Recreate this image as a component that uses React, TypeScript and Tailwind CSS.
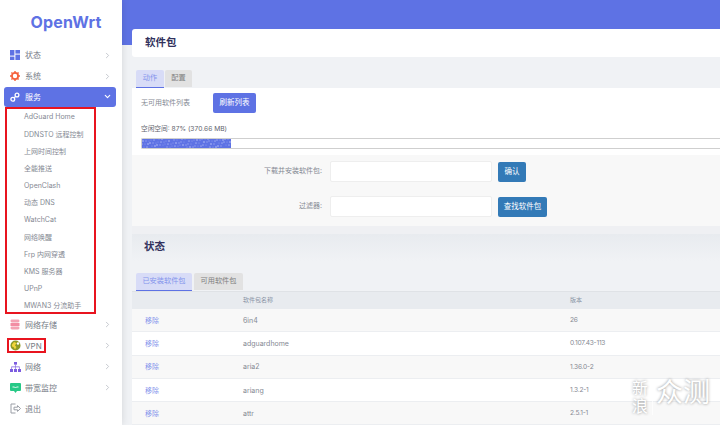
import { ChevronRight, ChevronDown } from 'lucide-react';

const font = { fontFamily: 'Inter, "Noto Sans CJK SC", sans-serif' };

function DashIcon() {
  return (
    <svg width="10" height="10" viewBox="0 0 10 10" fill="#5e72e4">
      <rect x="0" y="0" width="4.4" height="5.6" />
      <rect x="5.4" y="0" width="4.6" height="3.6" />
      <rect x="0" y="6.6" width="4.4" height="3.4" />
      <rect x="5.4" y="4.6" width="4.6" height="5.4" />
    </svg>
  );
}

function GearIcon() {
  return (
    <svg width="10" height="10" viewBox="0 0 10 10" fill="none">
      <circle cx="5" cy="5" r="3.1" stroke="#f5603a" strokeWidth="1.8" />
      <g stroke="#f5603a" strokeWidth="1.4">
        <path d="M5 0v1.6M5 8.4V10M0 5h1.6M8.4 5H10M1.4 1.4l1.1 1.1M7.5 7.5l1.1 1.1M8.6 1.4L7.5 2.5M2.5 7.5L1.4 8.6" />
      </g>
    </svg>
  );
}

function ServiceIcon() {
  return (
    <svg width="10" height="10" viewBox="0 0 10 10" fill="none" stroke="#fff" strokeWidth="1.3">
      <circle cx="2.8" cy="7.2" r="1.9" />
      <circle cx="7" cy="3" r="1.9" />
      <path d="M4.2 5.8l1.4-1.4" />
    </svg>
  );
}

function StorageIcon() {
  return (
    <svg width="10" height="11" viewBox="0 0 10 11" fill="#f4a3b4">
      <rect x="0.5" y="0.5" width="9" height="3" rx="1.4" />
      <rect x="0.5" y="4" width="9" height="3" fill="#f28da3" />
      <rect x="0.5" y="7.5" width="9" height="3" rx="1.4" />
    </svg>
  );
}

function VpnIcon() {
  return (
    <svg width="11" height="11" viewBox="0 0 11 11">
      <circle cx="5.5" cy="5.5" r="5" fill="#8d9a26" />
      <path d="M2 4.5l2-2.5 2.5 1L5 5.5l1.5 1.5L5 9.5 3.5 7 2 6.5z" fill="#f2d43a" />
      <circle cx="8" cy="3.5" r="1.2" fill="#fff" />
    </svg>
  );
}

function NetworkIcon() {
  return (
    <svg width="11" height="10" viewBox="0 0 11 10" fill="#7c5ce0">
      <rect x="4" y="0" width="3" height="2.6" />
      <rect x="0" y="7" width="3" height="3" />
      <rect x="4" y="7" width="3" height="3" />
      <rect x="8" y="7" width="3" height="3" />
      <path d="M5.2 2.6h.6v2h3.9V7h-.6V5.2H5.8V7h-.6V5.2H1.9V7h-.6V4.6h3.9z" />
    </svg>
  );
}

function MonitorIcon() {
  return (
    <svg width="11" height="10" viewBox="0 0 11 10">
      <path d="M1 0h9a1 1 0 0 1 1 1v6a1 1 0 0 1-1 1H7l-1.5 2L4 8H1a1 1 0 0 1-1-1V1a1 1 0 0 1 1-1z" fill="#27c987" />
      <path d="M2.5 4h2l1 1 1-1h2" stroke="#fff" strokeWidth="0.9" fill="none" />
    </svg>
  );
}

function LogoutIcon() {
  return (
    <svg width="11" height="11" viewBox="0 0 11 11" fill="none" stroke="#9a9ea6" strokeWidth="1">
      <path d="M5.5 1H1v9h4.5" />
      <path d="M4 4.2h3.5V2.6l3 2.9-3 2.9V6.8H4z" />
    </svg>
  );
}

const subItems = [
  'AdGuard Home',
  'DDNSTO 远程控制',
  '上网时间控制',
  '全能推送',
  'OpenClash',
  '动态 DNS',
  'WatchCat',
  '网络唤醒',
  'Frp 内网穿透',
  'KMS 服务器',
  'UPnP',
  'MWAN3 分流助手',
];

const packages = [
  { name: '6in4', version: '26' },
  { name: 'adguardhome', version: '0.107.43-113' },
  { name: 'aria2', version: '1.36.0-2' },
  { name: 'ariang', version: '1.3.2-1' },
  { name: 'attr', version: '2.5.1-1' },
];

// scattered light specks across the used-space bar
const specks = Array.from({ length: 90 }, (_, i) => ({
  x: (i * 37) % 89,
  y: (i * 13) % 9,
  r: 0.5 + ((i * 7) % 5) * 0.12,
}));

function NavItem({ icon, label, arrow = true }: { icon: React.ReactNode; label: string; arrow?: boolean }) {
  return (
    <div className="h-[21px] flex items-center pl-[6px] pr-[6px] text-[8px] text-[#777c86]">
      <span className="w-[14px] flex justify-start">{icon}</span>
      <span className="ml-[1px]">{label}</span>
      {arrow && <ChevronRight size={9} className="ml-auto text-[#b4b8c0]" />}
    </div>
  );
}

function Tab({ label, active, width }: { label: string; active?: boolean; width: string }) {
  return active ? (
    <div className={`h-[18px] ${width} flex items-center justify-center rounded-t-[2px] bg-[#d8dcf7] border-b border-[#5e72e4] text-[7.2px] text-[#8494ec]`}>{label}</div>
  ) : (
    <div className={`h-[17px] ${width} flex items-center justify-center rounded-t-[2px] bg-[#e2e2e2] text-[7.2px] text-[#808080]`}>{label}</div>
  );
}

export default function App() {
  return (
    <div style={font} className="w-[720px] h-[425px] overflow-hidden flex relative bg-[#f0f2f5]">
      <aside className="w-[122px] shrink-0 h-full bg-white shadow-[0_0_8px_rgba(0,0,0,0.12)] z-10 px-[4px]">
        <div className="h-[44.5px] flex items-center justify-center pl-[10px] text-[16px] font-bold text-[#5e72e4] tracking-[0.2px]">OpenWrt</div>
        <NavItem icon={<DashIcon />} label="状态" />
        <NavItem icon={<GearIcon />} label="系统" />
        <div className="h-[20.5px] w-[111.5px] flex items-center rounded-[3px] bg-[#5e72e4] pl-[6px] pr-[3.5px] text-[8px] text-white">
          <span className="w-[14px] flex"><ServiceIcon /></span>
          <span className="ml-[1px]">服务</span>
          <ChevronDown size={9} strokeWidth={3} className="ml-auto" />
        </div>
        <div className="w-[91px] ml-[1px] h-[207px] border-[2px] border-[#e8141f] pl-[17px] flex flex-col">
          {subItems.map((s) => (
            <div key={s} className="h-[17.2px] shrink-0 flex items-center text-[7px] text-[#858993] whitespace-nowrap">{s}</div>
          ))}
        </div>
        <NavItem icon={<StorageIcon />} label="网络存储" />
        <div className="relative">
          <NavItem icon={<VpnIcon />} label="VPN" />
          <div className="absolute left-[3px] top-[3px] w-[39px] h-[15px] border-[2px] border-[#e8141f]" />
        </div>
        <NavItem icon={<NetworkIcon />} label="网络" />
        <NavItem icon={<MonitorIcon />} label="带宽监控" />
        <NavItem icon={<LogoutIcon />} label="退出" arrow={false} />
      </aside>

      <main className="flex-1 min-w-0 flex flex-col">
        <div className="h-[45px] bg-[#5e72e4] shrink-0" />
        <div className="pl-[10px] flex-1 -mt-[16px]">
          <div className="h-[28px] bg-white rounded-l-[3px] flex items-center pl-[13px] text-[10.5px] font-bold text-[#32325d]">软件包</div>

          <div className="flex gap-[1px] mt-[13px] pl-[4px]">
            <Tab label="动作" active width="w-[28px]" />
            <Tab label="配置" width="w-[27px]" />
          </div>

          <div className="bg-white h-[67px] pl-[9px] flex flex-col">
            <div className="flex items-center mt-[5px] text-[7px] text-[#858993]">
              <span className="w-[72px] whitespace-nowrap">无可用软件列表</span>
              <span className="h-[20px] w-[43px] flex items-center justify-center rounded-[2px] bg-[#5e72e4] text-white text-[7.5px]">刷新列表</span>
            </div>
            <div className="mt-[11px] text-[6.7px] text-[#5f646e] leading-[10px]">空闲空间: 87% (370.66 MB)</div>
            <div className="mt-[4px] h-[11px] border border-[#cfcfcf] border-r-0 rounded-l-[2px] bg-white">
              <svg width="89" height="9" className="block">
                <rect width="89" height="9" fill="#5e72e4" />
                {specks.map((d, i) => (
                  <circle key={i} cx={d.x} cy={d.y} r={d.r} fill="#93a1ef" />
                ))}
              </svg>
            </div>
          </div>

          <div className="h-[71px] bg-[#f8f8f8] flex flex-col pl-[114px]">
            <div className="flex items-center h-[21px] mt-[6px]">
              <span className="w-[76px] text-right text-[7px] text-[#858993] whitespace-nowrap">下载并安装软件包:</span>
              <div className="ml-[8px] w-[162px] h-[21px] bg-white border border-[#eeeeee] rounded-[2px]" />
              <span className="ml-[6px] h-[20px] w-[28px] flex items-center justify-center bg-[#337ab7] rounded-[2px] text-white text-[7.5px]">确认</span>
            </div>
            <div className="flex items-center h-[21px] mt-[14px]">
              <span className="w-[76px] text-right text-[7px] text-[#858993]">过滤器:</span>
              <div className="ml-[8px] w-[162px] h-[21px] bg-white border border-[#eeeeee] rounded-[2px]" />
              <span className="ml-[6px] h-[20px] w-[49px] flex items-center justify-center bg-[#337ab7] rounded-[2px] text-white text-[7.5px]">查找软件包</span>
            </div>
          </div>

          <div className="h-[8px] bg-[#eff0f3]" />
          <div className="h-[27px] pb-[2px] bg-gradient-to-b from-[#e8ebef] to-[#f0f2f5] flex items-center pl-[12px] text-[10.5px] font-bold text-[#32325d]">状态</div>

          <div className="flex items-start gap-[2px] mt-[12px] pl-[4px]">
            <Tab label="已安装软件包" active width="w-[56px]" />
            <Tab label="可用软件包" width="w-[49px]" />
          </div>

          <div className="grid grid-cols-[111px_327px_1fr] h-[18px] pb-[1.5px] items-center bg-[#e8ebef] text-[6px] text-[#8a94a6] border-t border-[#dfe2e6]">
            <span />
            <span>软件包名称</span>
            <span>版本</span>
          </div>
          {packages.map((p, i) => (
            <div key={p.name} className={`grid grid-cols-[111px_327px_1fr] h-[23.3px] pt-[1.5px] items-center border-b border-[#eceef1] ${i % 2 === 0 ? 'bg-[#f8f8f8]' : 'bg-white'}`}>
              <span className="pl-[13px] text-[7px] text-[#8494ec]">移除</span>
              <span className="text-[7px] text-[#858993]">{p.name}</span>
              <span className="text-[6.6px] tracking-[-0.2px] text-[#858993]">{p.version}</span>
            </div>
          ))}
        </div>
      </main>

      {/* watermark */}
      <div className="absolute left-[632px] top-[379px] flex items-start text-white pointer-events-none [text-shadow:0_0_3px_rgba(0,0,0,0.45)]">
        <span className="text-[16px] leading-[18px] w-[16px]">新浪</span>
        <span className="w-[1px] h-[36px] bg-white/70 ml-[4px] mr-[3px]" />
        <span className="text-[27px] leading-[27px] whitespace-nowrap">众测</span>
      </div>
    </div>
  );
}
